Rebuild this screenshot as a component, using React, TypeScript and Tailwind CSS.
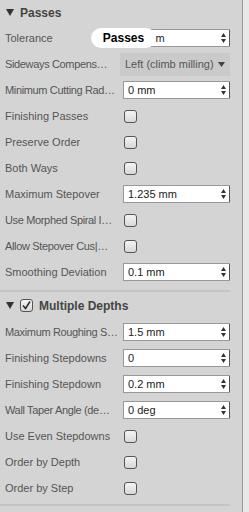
import React from 'react'

type Row =
  | { kind: 'input'; label: string; value: string }
  | { kind: 'check'; label: string }
  | { kind: 'select'; label: string; value: string }

const passes: Row[] = [
  { kind: 'input', label: 'Tolerance', value: '0.1 mm' },
  { kind: 'select', label: 'Sideways Compens…', value: 'Left (climb milling)' },
  { kind: 'input', label: 'Minimum Cutting Rad…', value: '0 mm' },
  { kind: 'check', label: 'Finishing Passes' },
  { kind: 'check', label: 'Preserve Order' },
  { kind: 'check', label: 'Both Ways' },
  { kind: 'input', label: 'Maximum Stepover', value: '1.235 mm' },
  { kind: 'check', label: 'Use Morphed Spiral I…' },
  { kind: 'check', label: 'Allow Stepover Cus|…' },
  { kind: 'input', label: 'Smoothing Deviation', value: '0.1 mm' },
]

const depths: Row[] = [
  { kind: 'input', label: 'Maximum Roughing S…', value: '1.5 mm' },
  { kind: 'input', label: 'Finishing Stepdowns', value: '0' },
  { kind: 'input', label: 'Finishing Stepdown', value: '0.2 mm' },
  { kind: 'input', label: 'Wall Taper Angle (de…', value: '0 deg' },
  { kind: 'check', label: 'Use Even Stepdowns' },
  { kind: 'check', label: 'Order by Depth' },
  { kind: 'check', label: 'Order by Step' },
]

const Triangle = () => (
  <svg width="8" height="7" viewBox="0 0 8 7" className="shrink-0">
    <path d="M0 0 L8 0 L4 7 Z" fill="#333" />
  </svg>
)

const Checkbox = ({ checked = false }: { checked?: boolean }) => (
  <div className="w-[13px] h-[13px] rounded-[3px] border border-[#555] bg-gradient-to-b from-[#f4f4f4] to-[#d8d8d8] flex items-center justify-center">
    {checked && (
      <svg width="11" height="11" viewBox="0 0 11 11">
        <path d="M2 5.5 L4.5 8.5 L9 1.5" fill="none" stroke="#222" strokeWidth="1.4" />
      </svg>
    )}
  </div>
)

const Spinner = () => (
  <div className="w-[13px] h-full flex flex-col items-center justify-between py-[3px] border-r border-[#555]">
    <svg width="5" height="4" viewBox="0 0 5 4">
      <path d="M0 4 L5 4 L2.5 0 Z" fill="#333" />
    </svg>
    <svg width="5" height="4" viewBox="0 0 5 4">
      <path d="M0 0 L5 0 L2.5 4 Z" fill="#333" />
    </svg>
  </div>
)

const Field = ({ row }: { row: Row }) => {
  const cut = row.label.endsWith('…')
  return (
    <div className="h-[26px] flex items-center">
      <div
        className={
          cut
            ? 'w-[118px] pl-[5px] whitespace-nowrap text-[#555] tracking-[-0.35px]'
            : 'w-[118px] pl-[5px] whitespace-nowrap text-[#555]'
        }
      >
        {row.label}
      </div>
      {row.kind === 'input' && (
        <div className="ml-[5px] w-[107px] h-[18px] flex bg-white border-y border-l border-[#999]">
          <div className="flex-1 pl-[4px] text-[#222] leading-[16px]">{row.value}</div>
          <Spinner />
        </div>
      )}
      {row.kind === 'check' && (
        <div className="ml-[6px]">
          <Checkbox />
        </div>
      )}
      {row.kind === 'select' && (
        <div className="ml-[2px] w-[110px] h-[23px] flex items-center justify-between bg-[#cacaca] pl-[5px] pr-[5px] text-[#555]">
          <span>{row.value}</span>
          <svg width="7" height="5" viewBox="0 0 7 5">
            <path d="M0 0 L7 0 L3.5 5 Z" fill="#444" />
          </svg>
        </div>
      )}
    </div>
  )
}

export default function App() {
  return (
    <div className="w-[249px] h-[512px] flex bg-[#e8e8e8] text-[11px] font-['Liberation_Sans',Arial,sans-serif] overflow-hidden">
      <div className="relative w-[243px] bg-[#d4d4d4] border-r border-[#9a9a9a]">
        <div className="h-[25px] flex items-center gap-[6px] pl-[6px]">
          <Triangle />
          <span className="font-bold text-[12px] text-[#444]">Passes</span>
        </div>
        {passes.map((r, i) => (
          <Field key={i} row={r} />
        ))}
        <div className="mt-[5px] w-[230px] h-[2px] bg-[#c4c4c4]" />
        <div className="h-[27px] flex items-center gap-[6px] pl-[6px]">
          <Triangle />
          <Checkbox checked />
          <span className="font-bold text-[12px] text-[#444]">Multiple Depths</span>
        </div>
        {depths.map((r, i) => (
          <Field key={i} row={r} />
        ))}
        <div className="mt-[3px] w-[230px] h-[2px] bg-[#c4c4c4]" />

        <div className="absolute left-[91px] top-[28px] w-[65px] h-[20px] rounded-full bg-white flex items-center justify-center font-bold text-[12px] text-black">
          Passes
        </div>
      </div>
    </div>
  )
}
